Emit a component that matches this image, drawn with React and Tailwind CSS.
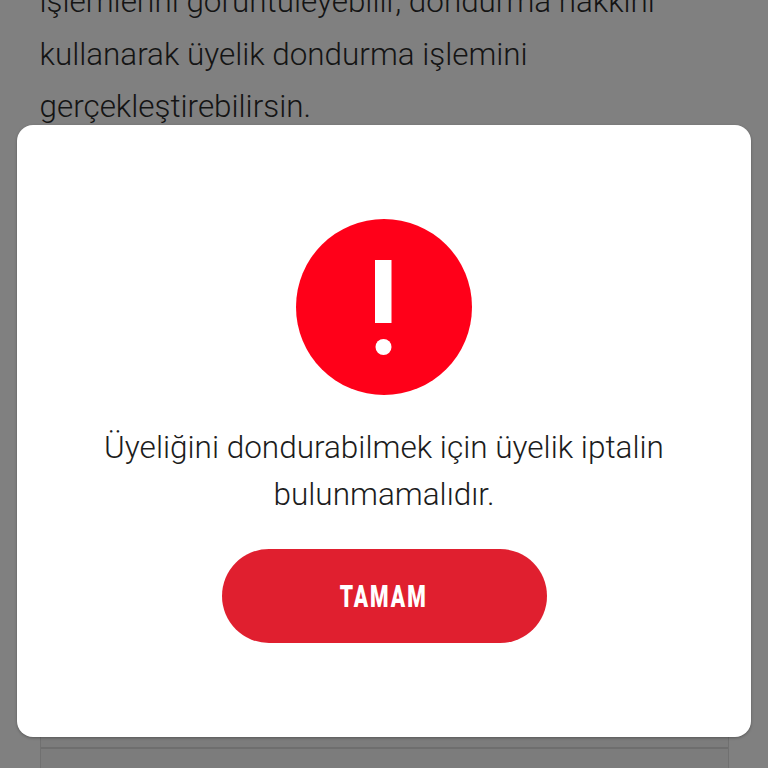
import React from 'react';

const App = () => {
  return (
    <div className="relative h-[768px] w-full overflow-hidden bg-[#808080] font-['Roboto',sans-serif]">
      {/* page behind the dialog */}
      <div className="pl-[39.5px] pr-[39px] mt-[-24px]">
        <p className="text-[31.4px] leading-[52.5px] font-light text-[#141414] h-[700px]">
          işlemlerini görüntüleyebilir, dondurma hakkını
          <br />
          kullanarak üyelik dondurma işlemini
          <br />
          gerçekleştirebilirsin.
        </p>
        <div className="h-[100px] border-x border-[#707070] bg-[#7c7c7c]">
          <div className="h-[73px] border-b-2 border-[#6e6e6e]"></div>
        </div>
      </div>

      {/* dialog */}
      <div className="absolute left-[17px] top-[125px] w-[734px] h-[612px] rounded-[16px] bg-white flex flex-col items-center pt-[94px] shadow-[0_1px_3px_rgba(0,0,0,0.3)]">
        <svg width="176" height="176" viewBox="0 0 176 176">
          <circle cx="88" cy="88" r="88" fill="#ff0019" />
          <rect x="79" y="41" width="16.5" height="63" fill="#fff" />
          <circle cx="87.5" cy="128" r="8" fill="#fff" />
        </svg>
        <p className="mt-[29px] text-[31.5px] leading-[47px] font-light text-[#1c1c1c] text-center">
          Üyeliğini dondurabilmek için üyelik iptalin
          <br />
          bulunmamalıdır.
        </p>
        <button className="mt-[31px] w-[325px] h-[94px] rounded-full bg-[#e01f2f] flex items-center justify-center">
          <span className="text-[32px] leading-none font-black tracking-[3px] text-white scale-x-[0.66]">TAMAM</span>
        </button>
      </div>
    </div>
  );
};

export default App;
